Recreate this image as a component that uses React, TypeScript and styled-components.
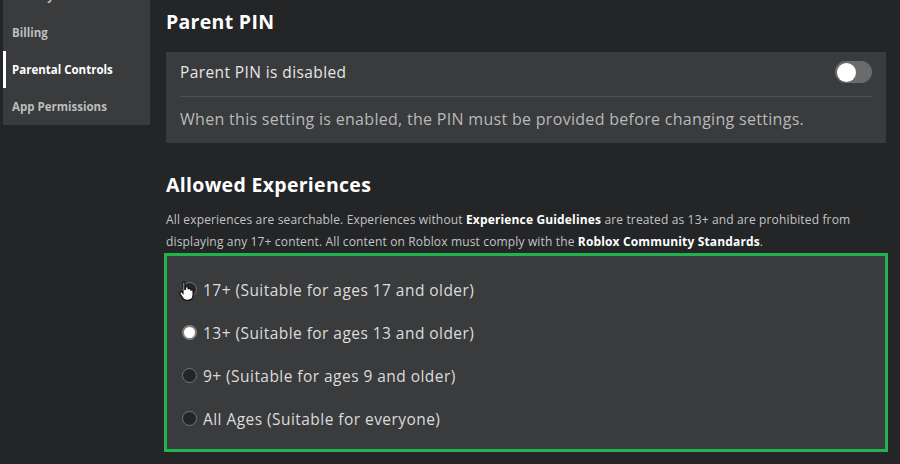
import * as React from "react";
import { useState } from "react";
import styled, { createGlobalStyle } from "styled-components";

const GlobalStyle = createGlobalStyle`
    html, body {
        margin: 0;
        padding: 0;
        background: #232527;
        overflow: hidden;
    }
    body {
        font-family: "Open Sans", "Noto Sans", sans-serif;
        color: #fff;
    }
`;

const Page = styled.div`
    display: flex;
    align-items: flex-start;
    width: 900px;
    height: 464px;
    overflow: hidden;
`;

const Sidebar = styled.ul`
    list-style: none;
    margin: -23px 0 0 3px;
    padding: 0;
    width: 147px;
    flex-shrink: 0;
    background: #393b3d;
`;

const NavItem = styled.li<{active?: boolean}>`
    height: 37px;
    display: flex;
    align-items: center;
    padding-left: 6px;
    font-size: 11.5px;
    font-weight: 700;
    color: ${props => props.active ? "#fff" : "#bdbebe"};
    border-left: 3px solid ${props => props.active ? "#fff" : "transparent"};
`;

const Main = styled.main`
    width: 720px;
    margin-left: 16px;
    padding-top: 10px;
`;

const SectionTitle = styled.h2<{top?: number}>`
    margin: ${props => props.top || 0}px 0 0;
    font-size: 19.5px;
    line-height: 24px;
    letter-spacing: 0.3px;
    font-weight: 700;
    color: #fff;
`;

const Card = styled.div`
    margin-top: 18px;
    background: #393b3d;
    padding: 0 14px;
`;

const CardRow = styled.div`
    height: 45px;
    display: flex;
    align-items: center;
    justify-content: space-between;
    border-bottom: 1px solid #4f5153;
    padding-bottom: 4px;
    box-sizing: border-box;
    font-size: 15.5px;
    letter-spacing: 0.4px;
    color: #e6e6e6;
`;

const Toggle = styled.button<{on: boolean}>`
    width: 37px;
    height: 22px;
    border: none;
    border-radius: 11px;
    padding: 0 2px;
    display: flex;
    align-items: center;
    justify-content: ${props => props.on ? "flex-end" : "flex-start"};
    background: ${props => props.on ? "#00b06f" : "#6a6b6c"};
    cursor: pointer;
    & > span {
        width: 19px;
        height: 19px;
        border-radius: 50%;
        background: #fff;
    }
`;

const CardNote = styled.p`
    margin: 0;
    padding: 10px 0 12px;
    font-size: 16px;
    line-height: 24px;
    letter-spacing: 0.3px;
    color: #b8b9ba;
`;

const Blurb = styled.p`
    margin: 12px 0 0;
    font-size: 12px;
    line-height: 22px;
    letter-spacing: 0.15px;
    color: #c3c4c5;
    & > b {
        color: #fff;
        font-weight: 700;
    }
`;

const OptionBox = styled.div`
    position: relative;
    margin: 0 -2px;
    border: 3px solid #21b34e;
    background: #393b3d;
    padding: 12px 0 9px 15px;
`;

const OptionRow = styled.label`
    height: 43px;
    display: flex;
    align-items: center;
    gap: 6px;
    font-size: 15.5px;
    letter-spacing: 0.45px;
    color: #dcdcdc;
    cursor: pointer;
    & > input {
        display: none;
    }
`;

const RadioDot = styled.span<{checked: boolean}>`
    width: 15px;
    height: 15px;
    box-sizing: border-box;
    border-radius: 50%;
    border: ${props => props.checked ? "2px solid #808182" : "1px solid #737475"};
    background: ${props => props.checked ? "#fff" : "#232527"};
    flex-shrink: 0;
`;

const Pointer = styled.svg`
    position: absolute;
    left: 12px;
    top: 24px;
    pointer-events: none;
`;

const options = [
    "17+ (Suitable for ages 17 and older)",
    "13+ (Suitable for ages 13 and older)",
    "9+ (Suitable for ages 9 and older)",
    "All Ages (Suitable for everyone)",
];

export default function App() {
    const [pinOn, setPinOn] = useState(false);
    const [checked, setChecked] = useState(1);

    return (
        <Page>
            <GlobalStyle />
            <Sidebar>
                <NavItem>Privacy</NavItem>
                <NavItem>Billing</NavItem>
                <NavItem active>Parental Controls</NavItem>
                <NavItem>App Permissions</NavItem>
            </Sidebar>
            <Main>
                <SectionTitle>Parent PIN</SectionTitle>
                <Card>
                    <CardRow>
                        <span>Parent PIN is disabled</span>
                        <Toggle on={pinOn} onClick={() => setPinOn(!pinOn)}>
                            <span />
                        </Toggle>
                    </CardRow>
                    <CardNote>When this setting is enabled, the PIN must be provided before changing settings.</CardNote>
                </Card>
                <SectionTitle top={30}>Allowed Experiences</SectionTitle>
                <Blurb>
                    All experiences are searchable. Experiences without <b>Experience Guidelines</b> are treated as 13+ and are prohibited from displaying any 17+ content. All content on Roblox must comply with the <b>Roblox Community Standards</b>.
                </Blurb>
                <OptionBox>
                    {options.map((op, i) => (
                        <OptionRow key={i}>
                            <input type="radio" checked={checked === i} onChange={() => setChecked(i)} />
                            <RadioDot checked={checked === i} />
                            <span>{op}</span>
                        </OptionRow>
                    ))}
                    {/* hand cursor hovering the first option */}
                    <Pointer width="15" height="23" viewBox="0 0 14 22">
                        <path
                            d="M4 1.5c.8 0 1.4.6 1.4 1.4V9l.6-.1V7.6c0-.8.6-1.3 1.3-1.3s1.3.5 1.3 1.3v1.2c.2-.6.7-.9 1.3-.9.7 0 1.2.5 1.2 1.2v.9c.2-.4.6-.6 1-.6.7 0 1.2.5 1.2 1.2v3.6c0 2.9-2 5.3-5 5.3H7.2c-1.6 0-2.7-.7-3.6-1.9L1 13.4c-.5-.7-.4-1.5.2-1.9.6-.4 1.3-.3 1.8.3l.6.8V2.9c0-.8.6-1.4 1.4-1.4z"
                            fill="#fff"
                            stroke="#111"
                            strokeWidth="1.2"
                        />
                    </Pointer>
                </OptionBox>
            </Main>
        </Page>
    );
}
